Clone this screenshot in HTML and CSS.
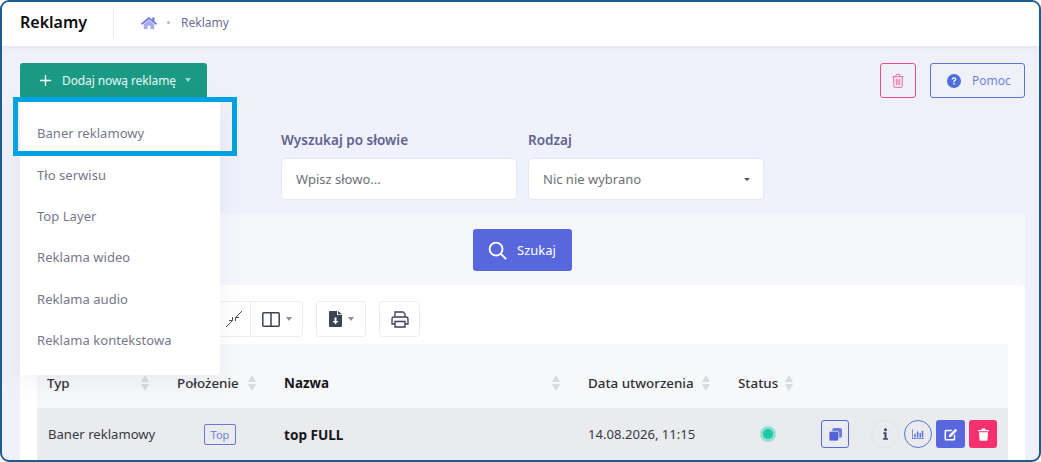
FILE: index.html
```html
<!DOCTYPE html>
<html lang="pl">
<head>
<meta charset="utf-8">
<title>Reklamy</title>
<link rel="stylesheet" href="styles.css">
</head>
<body>
<div class="frame">
  <header class="topbar">
    <h1 class="title">Reklamy</h1>
    <nav class="crumbs">
      <svg class="home" viewBox="0 0 576 512" width="16" height="14"><path d="M280 148 96 300v164a16 16 0 0 0 16 16l112-.3a16 16 0 0 0 16-16V368a16 16 0 0 1 16-16h64a16 16 0 0 1 16 16v95.600a16 16 0 0 0 16 16l112 .4a16 16 0 0 0 16-16V300L296 148a12 12 0 0 0-16 0z" opacity=".6"/><path d="M572 268 488 199V60a12 12 0 0 0-12-12h-56a12 12 0 0 0-12 12v73L318 59a48 48 0 0 0-61 0L4 268a12 12 0 0 0-2 17l26 31a12 12 0 0 0 17 2L280 124a12 12 0 0 1 16 0l235 194a12 12 0 0 0 17-2l26-31a12 12 0 0 0-2-17z"/></svg>
      <span class="dot"></span>
      <span class="crumb">Reklamy</span>
    </nav>
  </header>

  <main class="content">
    <div class="actions">
      <div class="add-wrap">
        <button class="add-btn" type="button">
          <svg viewBox="0 0 14 14" width="13" height="13"><path d="M7 1v12M1 7h12" stroke="#fff" stroke-width="1.400" fill="none"/></svg>
          <span>Dodaj nową reklamę</span>
          <i class="caret caret-light"></i>
        </button>
        <ul class="menu">
          <li>Baner reklamowy</li>
          <li>Tło serwisu</li>
          <li>Top Layer</li>
          <li>Reklama wideo</li>
          <li>Reklama audio</li>
          <li>Reklama kontekstowa</li>
        </ul>
        <div class="highlight"></div>
      </div>
      <div class="actions-right">
        <button class="trash-btn" type="button" aria-label="Usuń">
          <svg viewBox="0 0 14 16" width="12" height="14" fill="none" stroke="#ee5a8e" stroke-width="1"><path d="M.5 3h13M4.500 3V1.500a1 1 0 0 1 1-1h3a1 1 0 0 1 1 1V3M2 3v11a1.500 1.500 0 0 0 1.500 1.500h7A1.500 1.500 0 0 0 12 14V3M5 5.500v7.500M7 5.500v7.500M9 5.500v7.500"/></svg>
        </button>
        <button class="help-btn" type="button">
          <svg viewBox="0 0 16 16" width="14" height="14"><circle cx="8" cy="8" r="8" fill="#4f6fdc"/><path d="M5.400 6.200C5.400 4.700 6.600 3.700 8 3.700c1.500 0 2.700.9 2.700 2.300 0 1.900-2.100 1.800-2.100 3.300H7.100c0-2.200 2-2.100 2-3.200 0-.5-.5-.9-1.100-.9-.7 0-1.100.4-1.200 1.100z" fill="#fff"/><rect x="7.100" y="10.300" width="1.500" height="1.700" fill="#fff"/></svg>
          <span>Pomoc</span>
        </button>
      </div>
    </div>

    <section class="panel">
      <form class="filters">
        <div class="field">
          <label>Wyszukaj po słowie</label>
          <div class="input">Wpisz słowo...</div>
        </div>
        <div class="field">
          <label>Rodzaj</label>
          <div class="input select">Nic nie wybrano<i class="caret caret-dark"></i></div>
        </div>
      </form>
      <div class="search-row">
        <button class="search-btn" type="button">
          <svg viewBox="0 0 20 20" width="19" height="19" fill="none" stroke="#fff" stroke-width="2"><circle cx="8.500" cy="8.500" r="6.800"/><path d="m13.500 13.500 5.500 5.500"/></svg>
          <span>Szukaj</span>
        </button>
      </div>
      <div class="card">
        <div class="tools">
          <div class="tool-group">
            <button class="tool tool-compress" type="button">
              <svg viewBox="0 0 18 18" width="18" height="18" fill="none" stroke="#4a505c" stroke-width="1"><path d="M1 17 7.500 10.500M17 1 10.500 7.500M7.500 7v3.500H4M10.500 11V7.500H14"/></svg>
            </button>
            <button class="tool tool-cols" type="button">
              <svg viewBox="0 0 18 15" width="18" height="15" fill="none" stroke="#3c4250" stroke-width="1.500"><rect x=".8" y=".8" width="16.400" height="13.400" rx="1"/><path d="M9 1v13"/></svg>
              <i class="caret caret-grey"></i>
            </button>
          </div>
          <button class="tool tool-export" type="button">
            <svg viewBox="0 0 13 16" width="13" height="16"><path d="M0 1a1 1 0 0 1 1-1h7v4h5v11a1 1 0 0 1-1 1H1a1 1 0 0 1-1-1z" fill="#3c4456"/><path d="M9 0l4 3.300H9z" fill="#3c4456"/><path d="M5.500 6.500h2v3.500h2l-3 3.200-3-3.200h2z" fill="#fff"/></svg>
            <i class="caret caret-grey"></i>
          </button>
          <button class="tool tool-print" type="button">
            <svg viewBox="0 0 18 17" width="18" height="17" fill="none" stroke="#3c4250" stroke-width="1.300"><path d="M4 6V1h8l2 2v3M4 13H1V8a2 2 0 0 1 2-2h12a2 2 0 0 1 2 2v5h-3M4 10.500h10V16H4z"/></svg>
          </button>
        </div>
        <table class="grid">
          <colgroup>
            <col class="c-typ"><col class="c-pos"><col class="c-name"><col class="c-date"><col class="c-status"><col class="c-copy"><col class="c-ops">
          </colgroup>
          <thead>
            <tr>
              <th><span class="th">Typ<i class="sort"></i></span></th>
              <th><span class="th">Położenie<i class="sort"></i></span></th>
              <th class="strong"><span class="th">Nazwa<i class="sort"></i></span></th>
              <th><span class="th">Data utworzenia<i class="sort"></i></span></th>
              <th><span class="th">Status<i class="sort"></i></span></th>
              <th></th>
              <th></th>
            </tr>
          </thead>
          <tbody>
            <tr>
              <td class="first">Baner reklamowy</td>
              <td class="center"><span class="badge">Top</span></td>
              <td class="bold">top FULL</td>
              <td>14.08.2026, 11:15</td>
              <td class="center-status"><span class="status"></span></td>
              <td>
                <button class="op op-copy" type="button" aria-label="Kopiuj">
                  <svg viewBox="0 0 14 14" width="13" height="13" fill="#6f7ae0"><rect x="3.500" y="0" width="10.500" height="10.500" rx="2"/><rect x="0" y="3.500" width="10.500" height="10.500" rx="2" fill="#5560d4" stroke="#e9ebee" stroke-width=".8"/></svg>
                </button>
              </td>
              <td>
                <div class="ops">
                  <button class="op op-info" type="button" aria-label="Informacje">
                    <svg viewBox="0 0 6 14" width="5" height="12" fill="#3f4560"><circle cx="3" cy="1.800" r="1.800"/><path d="M.5 5h3.700v7H6v2H0v-2h1.800V7H.5z"/></svg>
                  </button>
                  <button class="op op-chart" type="button" aria-label="Statystyki">
                    <svg viewBox="0 0 16 13" width="12" height="10" fill="#5a72d8"><path d="M0 0h1v12h15v1H0z"/><path d="M3 6h2v5H3zM6.500 3h2v8h-2zM10 5h2v6h-2zM13 2h2v9h-2z"/></svg>
                  </button>
                  <button class="op op-edit" type="button" aria-label="Edytuj">
                    <svg viewBox="0 0 15 14" width="14" height="13" fill="#fff"><path d="M2 2h7L7.600 3.500H2.200v8.300h8.300V8L12 6.500V12a1.500 1.500 0 0 1-1.500 1.500H2A1.500 1.500 0 0 1 .5 12V3.500A1.500 1.500 0 0 1 2 2z"/><path d="M12.200.8l2 2-6.500 6.500-2.600.6.600-2.600z"/></svg>
                  </button>
                  <button class="op op-del" type="button" aria-label="Usuń">
                    <svg viewBox="0 0 12 14" width="11" height="13" fill="#fff"><path d="M0 2h3.500l.6-1.500h3.800L8.500 2H12v1.500H0zM1 4.500h10l-.7 8.300a1 1 0 0 1-1 1H2.700a1 1 0 0 1-1-1z"/></svg>
                  </button>
                </div>
              </td>
            </tr>
          </tbody>
        </table>
      </div>
    </section>
  </main>
</div>
</body>
</html>
```

FILE: styles.css
```css
* { box-sizing: border-box; }
html, body { margin: 0; padding: 0; background: #fff; }
body { font-family: "Noto Sans", "Open Sans", sans-serif; color: #3f4047; }
button { font-family: inherit; cursor: pointer; padding: 0; }
ul { margin: 0; padding: 0; list-style: none; }

.frame {
  width: 1041px;
  height: 462px;
  border: 2px solid #1a5d8f;
  border-radius: 9px;
  overflow: hidden;
  background: #f0f1f8;
  display: flex;
  flex-direction: column;
}

.topbar {
  height: 44px;
  flex: none;
  background: #fff;
  display: flex;
  align-items: center;
  padding-bottom: 3px;
  box-shadow: 0 1px 6px rgba(80, 90, 110, .1);
  position: relative;
  z-index: 1;
}
.title {
  margin: 0;
  padding: 0 0 0 18px;
  width: 112px;
  height: 30px;
  line-height: 29px;
  font-size: 16px;
  font-weight: 600;
  color: #0d0d12;
  border-right: 1px solid #e8e9f1;
}
.crumbs { display: flex; align-items: center; margin-left: 27px; }
.home { fill: #7078dc; }
.dot { width: 3px; height: 3px; border-radius: 50%; background: #b5b7c8; margin: 0 11px 0 10px; }
.crumb { font-size: 12px; color: #6d6f95; }

.content { flex: 1; min-height: 0; padding: 17px 14px 0 18px; }

.actions { display: flex; justify-content: space-between; align-items: flex-start; height: 52px; }
.add-wrap { position: relative; width: 187px; z-index: 2; }
.add-btn {
  width: 187px;
  height: 34px;
  border: 0;
  border-radius: 3px 3px 0 0;
  background: #1a9a85;
  color: #e9f7f4;
  font-size: 12px;
  letter-spacing: -.1px;
  display: flex;
  align-items: center;
  padding-left: 19px;
}
.add-btn span { margin-left: 10px; }
.caret { display: inline-block; width: 0; height: 0; border-left: 3.500px solid transparent; border-right: 3.500px solid transparent; border-top: 4px solid; }
.caret-light { color: #9fd7cc; margin-left: 9px; }
.caret-dark { color: #4c4f5c; position: absolute; right: 13px; top: 19px; border-left-width: 3px; border-right-width: 3px; border-top-width: 3px; }
.caret-grey { color: #8b8f99; margin-left: 6px; border-left-width: 3px; border-right-width: 3px; }

.menu {
  position: absolute;
  left: 0;
  top: 34px;
  width: 200px;
  height: 278px;
  padding-top: 16px;
  background: #fff;
  border-radius: 0 0 4px 4px;
  box-shadow: 0 8px 24px rgba(80, 90, 130, .08);
}
.menu li {
  height: 41.400px;
  line-height: 41.400px;
  padding-left: 17px;
  font-size: 13px;
  letter-spacing: .05px;
  color: #76778a;
}
.menu li:nth-child(2) { line-height: 43px; }
.highlight {
  position: absolute;
  left: -7px;
  top: 34px;
  width: 224px;
  height: 59px;
  border: 5px solid #00a3e0;
}

.actions-right { display: flex; gap: 14px; }
.trash-btn {
  width: 36px;
  height: 35px;
  background: transparent;
  border: 1px solid #ec4f86;
  border-radius: 3px;
  display: flex;
  align-items: center;
  justify-content: center;
}
.help-btn {
  width: 95px;
  height: 35px;
  background: transparent;
  border: 1px solid #5a76d6;
  border-radius: 3px;
  color: #6a84dc;
  font-size: 12px;
  display: flex;
  align-items: center;
  padding-left: 16px;
  gap: 11px;
}

.panel { border-radius: 6px; background: #f6f7fb; }
.filters {
  height: 99px;
  background: #eff1fd;
  border-radius: 6px 6px 0 0;
  display: flex;
  gap: 11px;
  padding: 15px 0 0 261px;
}
.field { display: flex; flex-direction: column; }
.field label { font-size: 13.500px; font-weight: 600; color: #61648c; line-height: 20px; height: 28px; }
.input {
  position: relative;
  height: 42px;
  line-height: 40px;
  background: #fff;
  border: 1px solid #e6e8f2;
  border-radius: 4px;
  padding-left: 14px;
  font-size: 13px;
  color: #6d7077;
  width: 236px;
}

.search-row { height: 71px; display: flex; justify-content: center; padding-top: 15px; }
.search-btn {
  width: 99px;
  height: 42px;
  border: 0;
  border-radius: 3px;
  background: #5867dd;
  color: #fff;
  font-size: 13px;
  display: flex;
  align-items: center;
  padding-left: 15px;
  gap: 10px;
}

.card { background: #fff; border-radius: 6px 6px 0 0; padding: 16px 18px 0 17px; height: 200px; }
.tools { display: flex; height: 43px; gap: 13px; align-items: flex-start; padding-left: 180px; }
.tool-group { display: flex; }
.tool {
  height: 36px;
  background: #fff;
  border: 1px solid #ebedf2;
  display: flex;
  align-items: center;
  justify-content: center;
}
.tool-compress { width: 33px; border-right: 0; border-left: 0; }
.tool-cols { width: 53px; border-radius: 0 3px 3px 0; }
.tool-export { width: 50px; border-radius: 3px; }
.tool-print { width: 41px; border-radius: 4px; }

.grid { width: 971px; border-collapse: collapse; table-layout: fixed; }
.c-typ { width: 130px; } .c-pos { width: 107px; } .c-name { width: 304px; } .c-date { width: 150px; }
.c-status { width: 83px; } .c-copy { width: 50px; } .c-ops { width: 147px; }
thead tr { background: #f7f8fa; height: 64px; }
th { font-size: 13.400px; font-weight: 500; color: #2e3038; text-align: left; padding: 13px 18px 0 10px; }
th.strong { font-weight: 700; color: #15161c; }
.th { display: flex; align-items: center; justify-content: space-between; }
.sort { display: inline-block; width: 8px; height: 16px; position: relative; }
.sort::before, .sort::after { content: ""; position: absolute; left: 0; border-left: 4px solid transparent; border-right: 4px solid transparent; }
.sort::before { top: 0; border-bottom: 7px solid #d8dae2; }
.sort::after { bottom: 0; border-top: 7px solid #d8dae2; }
tbody tr { background: #e9ebee; height: 54px; }
td { font-size: 13.100px; color: #383a42; padding: 0 0 2px 10px; vertical-align: middle; }
td.first { padding-left: 11px; }
td.bold { font-weight: 700; font-size: 13.600px; color: #15161c; }
td.center { text-align: center; padding-left: 0; padding-right: 1px; }
.badge { display: inline-block; width: 32px; height: 21px; line-height: 19px; text-align: center; font-size: 11px; color: #7280d8; border: 1px solid #6a78dd; border-radius: 2px; }
.center-status { padding-left: 33px; }
.status { display: block; width: 14px; height: 14px; border-radius: 50%; background: #1dc9a6; border: 2px solid #8be0cf; box-shadow: 0 0 2px #1dc9a6; }
.ops { display: flex; gap: 4px; align-items: center; }
.op { width: 28px; height: 28px; display: flex; align-items: center; justify-content: center; border-radius: 3px; border: 0; background: transparent; }
.op-copy { border: 1px solid #5a67d8; }
.op-info { border: 1px solid #dfe2ea; border-radius: 50%; }
.op-chart { border: 1px solid #5a72d8; border-radius: 50%; margin-left: 1px; }
.op-edit { background: #5867dd; width: 29px; }
.op-del { background: #f4306f; }
```
